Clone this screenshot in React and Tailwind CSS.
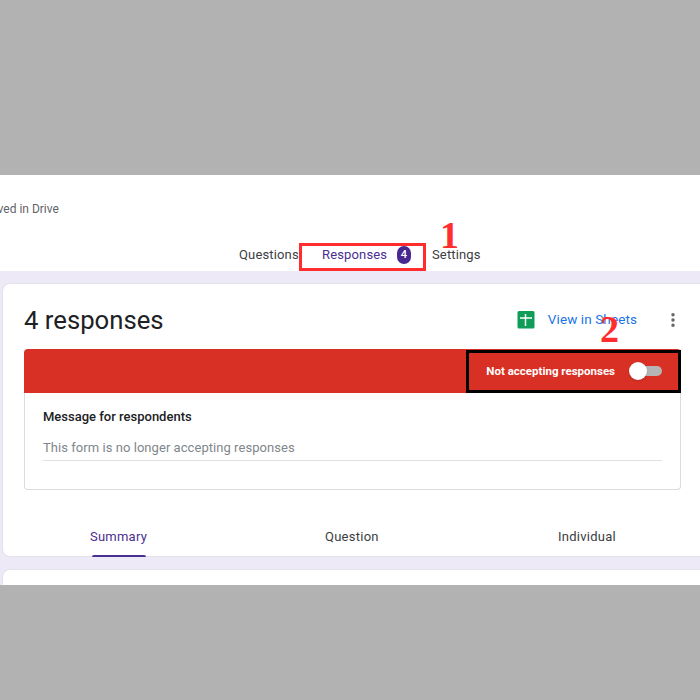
import { EllipsisVertical } from 'lucide-react'

const roboto = { fontFamily: 'Roboto, sans-serif' }

function SheetsIcon() {
  return (
    <svg width="18" height="18" viewBox="0 0 18 18">
      <rect x="0.5" y="0" width="17" height="17.5" rx="1.5" fill="#0f9d58" />
      <path d="M3 7h12M8.5 3v12" stroke="#fff" strokeWidth="1.5" fill="none" />
    </svg>
  )
}

function ToggleOff() {
  return (
    <div className="relative h-[10px] w-[28px] rounded-full bg-[#b5b5b5]">
      <div className="absolute left-[-5px] top-[-4px] h-[18px] w-[18px] rounded-full bg-white shadow" />
    </div>
  )
}

export default function App() {
  return (
    <div className="flex h-[700px] w-[700px] flex-col overflow-hidden bg-[#b2b2b2] pt-[175px] pb-[115px]" style={roboto}>
      <div className="relative flex h-[410px] flex-col overflow-hidden bg-[#ede9f6]">
        <header className="h-[96px] shrink-0 bg-white">
          <p className="ml-[-16px] pt-[27px] text-[12px] leading-[14px] text-[#5f6368]">Saved in Drive</p>
          <nav className="mt-[29px] ml-[239px] flex items-center text-[13px] leading-[20px] font-normal tracking-[0.15px] text-[#3c4043]">
            <span className="w-[61px]">Questions</span>
            <span className="ml-[22px] w-[64px] text-[#4b2e91]">Responses</span>
            <span className="ml-[11px] flex h-[18px] w-[14px] items-center justify-center rounded-full bg-[#47298f] text-[11px] font-medium text-white">4</span>
            <span className="ml-[21px]">Settings</span>
          </nav>
        </header>

        <section className="mt-[12px] ml-[2px] h-[274px] w-[720px] shrink-0 rounded-lg border border-[#e3e1ea] bg-white">
          <div className="flex h-[65px] w-[679px] items-center pt-[6px] pl-[21px]">
            <h2 className="flex-1 text-[25.7px] leading-[32px] text-[#202124]">4 responses</h2>
            <SheetsIcon />
            <span className="ml-[13px] text-[13.5px] tracking-[0.1px] text-[#1a73e8]">View in Sheets</span>
            <EllipsisVertical size={18} strokeWidth={2.6} className="ml-[27px] text-[#5f6368]" />
          </div>

          <div className="ml-[21px] w-[657px]">
            <div className="flex h-[44px] items-center justify-end rounded-t-sm bg-[#d93025] pr-[19px]">
              <span className="pt-[1px] text-[11.5px] font-bold text-white">Not accepting responses</span>
              <div className="ml-[19px]">
                <ToggleOff />
              </div>
            </div>
            <div className="h-[97px] rounded-b-sm border border-t-0 border-[#dadce0] px-[18px]">
              <p className="pt-[16px] text-[13px] leading-[16px] font-medium text-[#202124]">Message for respondents</p>
              <p className="mt-[13px] border-b border-[#e0e0e0] pb-[2px] text-[13px] leading-[20px] tracking-[0.05px] text-[#80868b]">This form is no longer accepting responses</p>
            </div>
          </div>

          <div className="mt-[37px] flex w-[700px] text-[13px] leading-[20px] font-normal tracking-[0.25px] text-[#3c4043]">
            <div className="ml-[87px] flex w-[57px] flex-col items-center">
              <span className="text-[#4b2e91]">Summary</span>
              <span className="mt-[8px] h-[2px] w-[54px] rounded-t-sm bg-[#4b2e91]" />
            </div>
            <span className="ml-[178px] w-[55px]">Question</span>
            <span className="ml-[178px]">Individual</span>
          </div>
        </section>

        <section className="mt-[12px] ml-[2px] h-[40px] w-[720px] shrink-0 rounded-lg border border-[#e3e1ea] bg-white" />

        {/* annotations on top of the screenshot */}
        <div className="absolute left-[299px] top-[68px] h-[28px] w-[127px] border-[3px] border-[#ff2d2d]" />
        <div className="absolute left-[466px] top-[175px] h-[43px] w-[215px] border-[3px] border-black" />
        <span className="absolute left-[440px] top-[42px] text-[38px] leading-[36px] font-bold text-[#ff2d2d]" style={{ fontFamily: '"Liberation Serif", serif' }}>1</span>
        <span className="absolute left-[600px] top-[136px] text-[38px] leading-[36px] font-bold text-[#ff2d2d]" style={{ fontFamily: '"Liberation Serif", serif' }}>2</span>
      </div>
    </div>
  )
}
